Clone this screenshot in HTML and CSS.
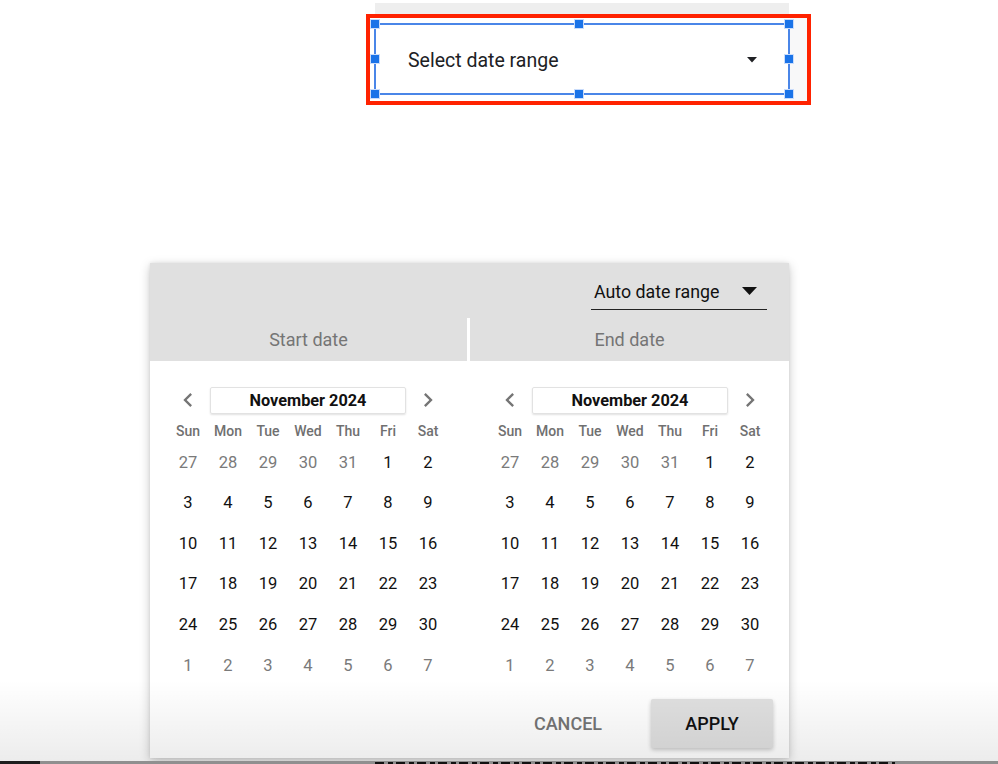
FILE: index.html
```html
<!DOCTYPE html>
<html>
<head>
<meta charset="utf-8">
<link rel="stylesheet" href="styles.css">
</head>
<body>
<div class="page">
  <div class="topbar"></div>
  <div class="redbox">
    <div class="widget">
      <span class="widget-label">Select date range</span>
      <svg class="widget-caret" width="10" height="6" viewBox="0 0 10 6"><polygon points="0,0 10,0 5,5.5" fill="#202124"/></svg>
    </div>
    <div class="widget-side"></div>
    <div class="selection">
      <span class="h tl"></span><span class="h tm"></span><span class="h tr"></span>
      <span class="h ml"></span><span class="h mr"></span>
      <span class="h bl"></span><span class="h bm"></span><span class="h br"></span>
    </div>
  </div>
</div>

<div class="popup">
  <div class="popup-head">
    <div class="auto-row">
      <div class="auto-select">
        <span>Auto date range</span>
        <svg width="15" height="8" viewBox="0 0 15 8"><polygon points="0,0 15,0 7.5,8" fill="#111"/></svg>
      </div>
    </div>
    <div class="tabs">
      <div class="tab">Start date</div>
      <div class="tab-div"></div>
      <div class="tab">End date</div>
    </div>
  </div>
  <div class="cals">
    <div class="cal">
      <div class="nav">
        <svg class="chev" width="28" height="28" viewBox="0 0 24 24"><path d="M15.41 7.41L14 6l-6 6 6 6 1.41-1.41L10.83 12z" fill="#757575"/></svg>
        <div class="month">November 2024</div>
        <svg class="chev" width="28" height="28" viewBox="0 0 24 24"><path d="M8.59 16.59L10 18l6-6-6-6-1.41 1.41L13.17 12z" fill="#757575"/></svg>
      </div>
      <div class="dow"><span>Sun</span><span>Mon</span><span>Tue</span><span>Wed</span><span>Thu</span><span>Fri</span><span>Sat</span></div>
      <div class="days">
        <span class="o">27</span><span class="o">28</span><span class="o">29</span><span class="o">30</span><span class="o">31</span><span>1</span><span>2</span>
        <span>3</span><span>4</span><span>5</span><span>6</span><span>7</span><span>8</span><span>9</span>
        <span>10</span><span>11</span><span>12</span><span>13</span><span>14</span><span>15</span><span>16</span>
        <span>17</span><span>18</span><span>19</span><span>20</span><span>21</span><span>22</span><span>23</span>
        <span>24</span><span>25</span><span>26</span><span>27</span><span>28</span><span>29</span><span>30</span>
        <span class="o">1</span><span class="o">2</span><span class="o">3</span><span class="o">4</span><span class="o">5</span><span class="o">6</span><span class="o">7</span>
      </div>
    </div>
    <div class="cal">
      <div class="nav">
        <svg class="chev" width="28" height="28" viewBox="0 0 24 24"><path d="M15.41 7.41L14 6l-6 6 6 6 1.41-1.41L10.83 12z" fill="#757575"/></svg>
        <div class="month">November 2024</div>
        <svg class="chev" width="28" height="28" viewBox="0 0 24 24"><path d="M8.59 16.59L10 18l6-6-6-6-1.41 1.41L13.17 12z" fill="#757575"/></svg>
      </div>
      <div class="dow"><span>Sun</span><span>Mon</span><span>Tue</span><span>Wed</span><span>Thu</span><span>Fri</span><span>Sat</span></div>
      <div class="days">
        <span class="o">27</span><span class="o">28</span><span class="o">29</span><span class="o">30</span><span class="o">31</span><span>1</span><span>2</span>
        <span>3</span><span>4</span><span>5</span><span>6</span><span>7</span><span>8</span><span>9</span>
        <span>10</span><span>11</span><span>12</span><span>13</span><span>14</span><span>15</span><span>16</span>
        <span>17</span><span>18</span><span>19</span><span>20</span><span>21</span><span>22</span><span>23</span>
        <span>24</span><span>25</span><span>26</span><span>27</span><span>28</span><span>29</span><span>30</span>
        <span class="o">1</span><span class="o">2</span><span class="o">3</span><span class="o">4</span><span class="o">5</span><span class="o">6</span><span class="o">7</span>
      </div>
    </div>
  </div>
  <div class="foot">
    <button class="btn cancel">CANCEL</button>
    <button class="btn apply">APPLY</button>
  </div>
</div>

<div class="fade"></div>
<div class="strip"><div class="strip-dark"></div><div class="strip-marks"></div></div>
</body>
</html>
```
FILE: styles.css
```css
html, body {
  margin: 0;
  padding: 0;
  background: #fff;
  width: 998px;
  height: 764px;
  overflow: hidden;
  font-family: Roboto, "Liberation Sans", sans-serif;
}
.page {
  padding-top: 3px;
}
.topbar {
  margin-left: 375px;
  width: 414px;
  height: 11px;
  background: #eeeeee;
}
.redbox {
  position: relative;
  margin-left: 366px;
  width: 437px;
  height: 83px;
  border: 4px solid #ff2200;
  display: flex;
}
.widget {
  width: 420px;
  background: #fff;
  display: flex;
  align-items: center;
  box-sizing: border-box;
  padding-left: 38px;
  padding-right: 33px;
  padding-top: 2px;
}
.widget-label {
  flex: 1;
  font-size: 19.5px;
  color: #202124;
}
.widget-caret {
  display: block;
  margin-top: -1px;
}
.widget-side {
  flex: 1;
  background: #f8f8f9;
}
.selection {
  position: absolute;
  left: 4px;
  top: 5px;
  width: 416px;
  height: 72px;
  box-sizing: border-box;
  border: 2px solid #4a86e8;
}
.h {
  position: absolute;
  width: 8px;
  height: 8px;
  background: #1a73e8;
  border: 1px solid #c9dcfb;
}
.tl { left: -6px; top: -6px; }
.tm { left: 198px; top: -6px; }
.tr { right: -6px; top: -6px; }
.ml { left: -6px; top: 29px; }
.mr { right: -6px; top: 29px; }
.bl { left: -6px; bottom: -6px; }
.bm { left: 198px; bottom: -6px; }
.br { right: -6px; bottom: -6px; }

.popup {
  position: absolute;
  left: 150px;
  top: 263px;
  width: 639px;
  background: #fff;
  box-shadow: 0 3px 10px rgba(0,0,0,0.22), 0 0 3px rgba(0,0,0,0.08);
}
.popup-head {
  background: #e0e0e0;
}
.auto-row {
  height: 55px;
  display: flex;
  justify-content: flex-end;
  padding-right: 22px;
  box-sizing: border-box;
}
.auto-select {
  margin-top: 12px;
  width: 176px;
  height: 35px;
  box-sizing: border-box;
  border-bottom: 1px solid #222;
  display: flex;
  align-items: center;
  justify-content: space-between;
  padding-left: 3px;
  padding-right: 10px;
  padding-bottom: 2px;
  font-size: 17.8px;
  color: #111;
}
.auto-select svg { display: block; margin-top: -1px; }
.tabs {
  display: grid;
  grid-template-columns: 317px 3px 1fr;
  height: 43px;
}
.tab {
  display: flex;
  align-items: center;
  justify-content: center;
  font-size: 18px;
  color: #757575;
}
.tab-div {
  background: #fff;
}
.cals {
  display: flex;
  gap: 42px;
  padding: 25px 19px 0 18px;
}
.cal {
  width: 280px;
}
.nav {
  display: grid;
  grid-template-columns: 40px 200px 40px;
  height: 27px;
  align-items: center;
  justify-items: center;
}
.chev { display: block; }
.month {
  box-sizing: border-box;
  width: 196px;
  height: 27px;
  border: 1px solid #e2e2e2;
  border-radius: 2px;
  box-shadow: 0 1px 2px rgba(0,0,0,0.12);
  text-align: center;
  line-height: 26px;
  font-size: 16.3px;
  font-weight: 700;
  color: #111;
}
.dow {
  margin-top: 8px;
  display: grid;
  grid-template-columns: repeat(7, 40px);
  height: 21.7px;
  line-height: 20.7px;
  text-align: center;
  font-size: 14px;
  font-weight: 500;
  color: #707070;
}
.days {
  display: grid;
  grid-template-columns: repeat(7, 40px);
  grid-auto-rows: 40.6px;
  line-height: 40.6px;
  text-align: center;
  font-size: 16.5px;
  color: #111;
}
.days .o { color: #7a7a7a; }
.foot {
  display: flex;
  justify-content: flex-end;
  gap: 22px;
  padding: 12.7px 16px 10px;
}
.btn {
  width: 122px;
  height: 49px;
  border: none;
  border-radius: 2px;
  font-family: Roboto, "Liberation Sans", sans-serif;
  font-size: 18px;
  font-weight: 500;
  background: transparent;
  padding: 0;
}
.cancel { color: #757575; }
.apply {
  background: #e0e0e0;
  color: #111;
  box-shadow: 0 2px 4px rgba(0,0,0,0.22);
}
.fade {
  position: absolute;
  left: 0;
  top: 680px;
  width: 998px;
  height: 81px;
  background: linear-gradient(to bottom, rgba(0,0,0,0), rgba(0,0,0,0.075));
  pointer-events: none;
}
.strip {
  position: absolute;
  left: 0;
  top: 761px;
  width: 998px;
  height: 3px;
  background: #8f8f8f;
  overflow: hidden;
}
.strip-dark {
  position: absolute;
  left: 0;
  top: 0;
  width: 40px;
  height: 3px;
  background: #1e1e1e;
}
.strip-marks {
  position: absolute;
  left: 375px;
  top: 1px;
  width: 520px;
  height: 2px;
  background: repeating-linear-gradient(to right, #111 0 9px, transparent 9px 13px, #111 13px 18px, transparent 18px 21px);
}
```
